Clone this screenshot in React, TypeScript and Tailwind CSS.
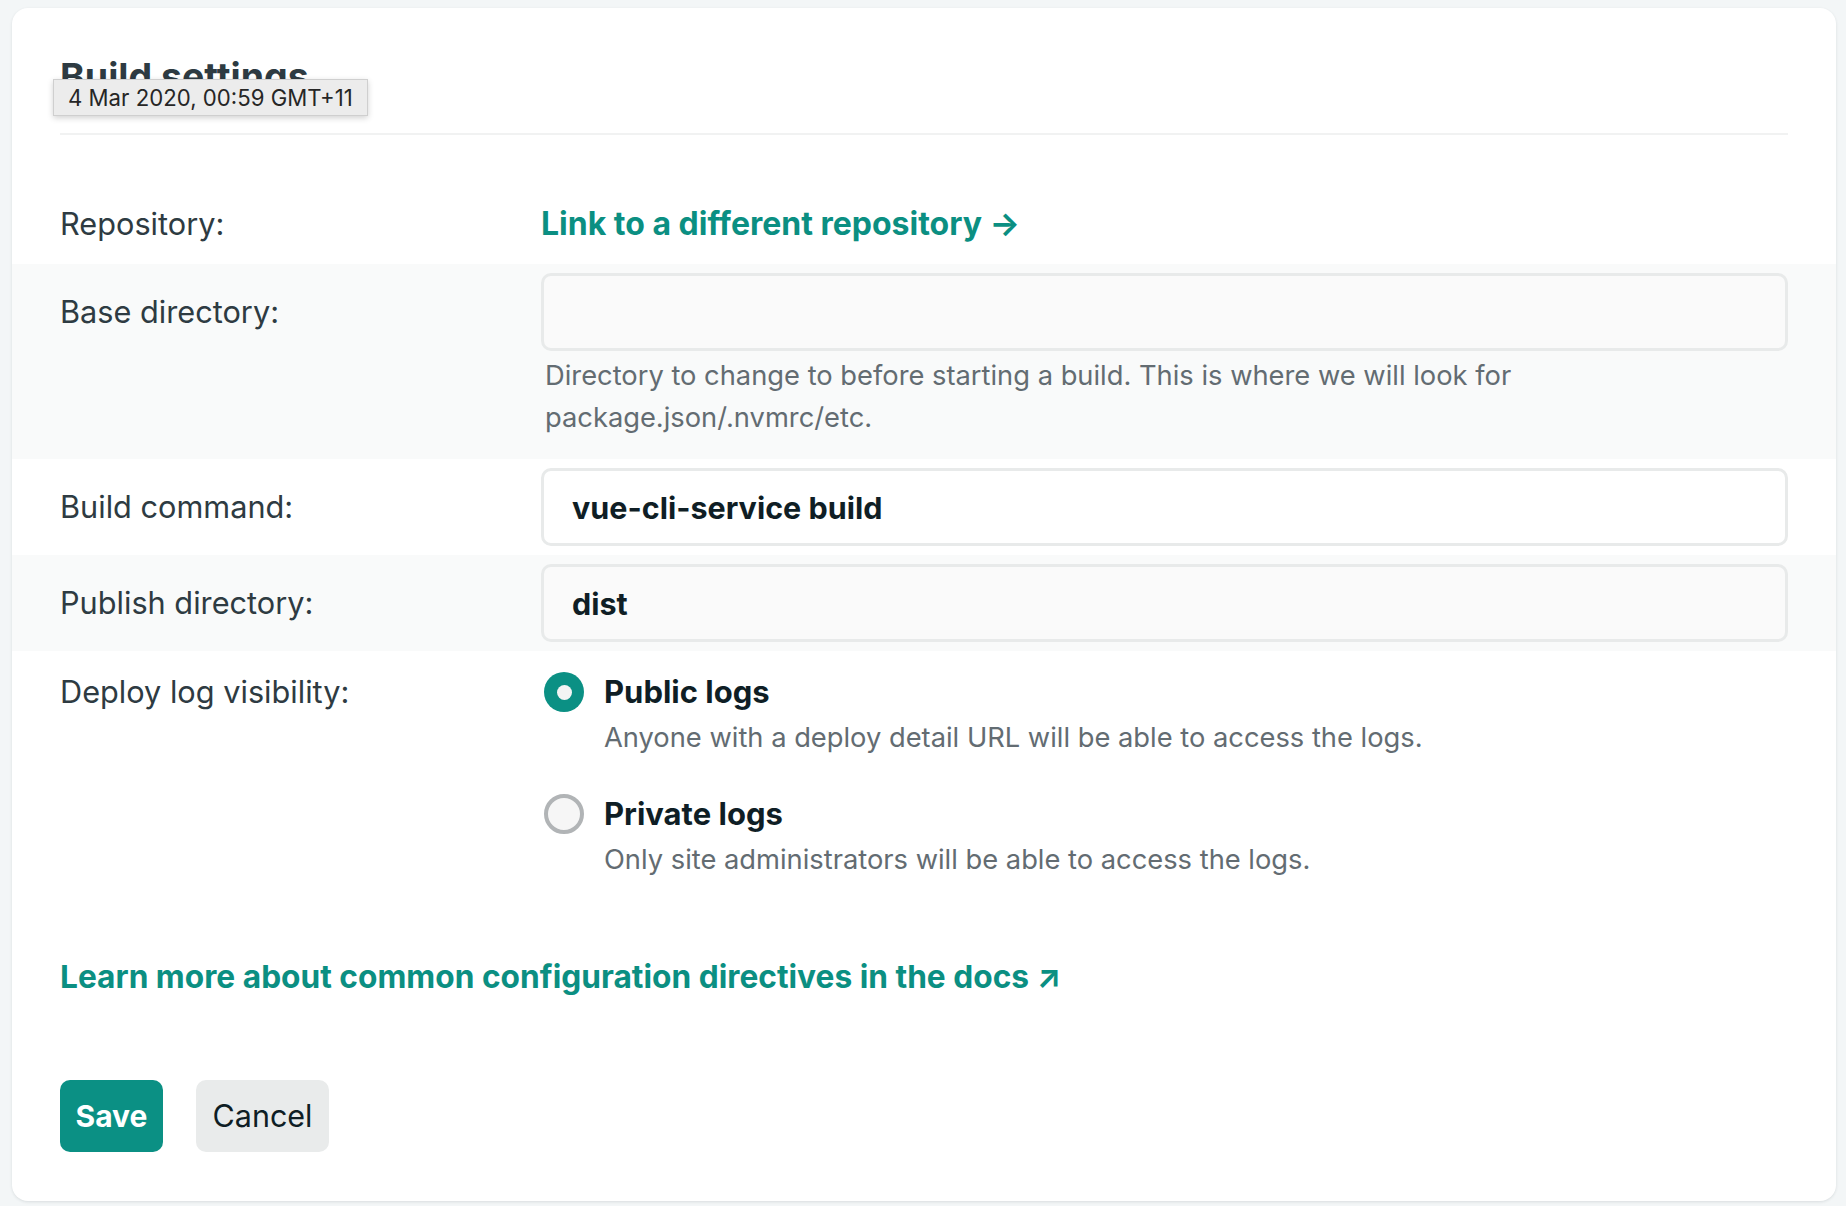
import React from 'react';

const Label: React.FC<{ children: React.ReactNode }> = ({ children }) => (
  <div className="w-[481px] shrink-0 text-[30.7px] text-[#2e3b42]">{children}</div>
);

const Field: React.FC<{ value?: string; white?: boolean }> = ({ value = '', white }) => (
  <input
    readOnly
    value={value}
    className={`h-[78px] w-full rounded-[10px] border-[3px] border-[#e8eaea] pl-[28px] text-[30.5px] font-bold text-[#0f1e25] outline-none ${
      white ? 'bg-white' : 'bg-[#fafafa]'
    }`}
  />
);

const Radio: React.FC<{ checked?: boolean; title: string; desc: string }> = ({ checked, title, desc }) => (
  <div className="flex">
    <div className="flex h-[40px] w-[40px] shrink-0 items-center justify-center">
      {checked ? (
        <span className="flex h-[40px] w-[40px] items-center justify-center rounded-full bg-[#0b9084]">
          <span className="h-[15px] w-[15px] rounded-full bg-[#f3f4f4]" />
        </span>
      ) : (
        <span className="h-[40px] w-[40px] rounded-full border-[4px] border-[#b1b4b6] bg-[#f6f6f6]" />
      )}
    </div>
    <div className="ml-[20px]">
      <div className="text-[31px] leading-[40px] font-bold text-[#0f1e25]">{title}</div>
      <div className="mt-[5px] text-[27.3px] leading-[42px] text-[#636c72]">{desc}</div>
    </div>
  </div>
);

export default function App() {
  return (
    <div className="min-h-screen bg-[#f3f6f7] pt-[8px] pl-[12px] font-['Inter',sans-serif]">
      <div className="w-[1824px] rounded-[16px] bg-white pb-[49px] shadow-[0_1px_3px_rgba(30,50,60,0.12)]">
        {/* header */}
        <div className="relative px-[48px] pt-[46px]">
          <h2 className="text-[37.5px] leading-[45px] font-bold text-[#2e3b42]">Build settings</h2>
          <div className="mt-[34px] h-[2px] bg-[#f1f2f2]" />
          <div className="absolute top-[71px] left-[41px] flex h-[37px] items-center border border-[#cfcfcf] bg-[#ececec] px-[14px] text-[22.2px] text-[#262626] shadow-[0_2px_6px_rgba(0,0,0,0.18)]">
            4 Mar 2020, 00:59 GMT+11
          </div>
        </div>

        {/* repository */}
        <div className="mt-[49px] flex h-[80px] items-center px-[48px]">
          <Label>Repository:</Label>
          <a className="text-[32px] font-bold text-[#0b8f82]">Link to a different repository →</a>
        </div>

        {/* base directory */}
        <div className="flex bg-[#f9fafa] px-[48px] pt-[9px] pb-[20px]">
          <div className="flex h-[78px] items-center">
            <Label>Base directory:</Label>
          </div>
          <div className="flex-1">
            <Field />
            <p className="pt-[4px] pl-[4px] text-[27.3px] leading-[42px] text-[#636c72]">
              Directory to change to before starting a build. This is where we will look for
              <br />
              package.json/.nvmrc/etc.
            </p>
          </div>
        </div>

        {/* build command */}
        <div className="flex items-center px-[48px] py-[9px]">
          <Label>Build command:</Label>
          <div className="flex-1">
            <Field value="vue-cli-service build" white />
          </div>
        </div>

        {/* publish directory */}
        <div className="flex items-center bg-[#f9fafa] px-[48px] py-[9px]">
          <Label>Publish directory:</Label>
          <div className="flex-1">
            <Field value="dist" />
          </div>
        </div>

        {/* deploy log visibility */}
        <div className="flex px-[48px] pt-[21px]">
          <div className="flex h-[40px] items-center">
            <Label>Deploy log visibility:</Label>
          </div>
          <div className="flex flex-col gap-[35px] pl-[3px]">
            <Radio checked title="Public logs" desc="Anyone with a deploy detail URL will be able to access the logs." />
            <Radio title="Private logs" desc="Only site administrators will be able to access the logs." />
          </div>
        </div>

        <div className="mt-[75px] px-[48px] text-[31.7px] leading-[42px] font-bold text-[#0b8f82]">
          Learn more about common configuration directives in the docs ↗
        </div>

        <div className="mt-[82px] flex gap-[33px] px-[48px]">
          <button className="h-[72px] w-[103px] rounded-[10px] bg-[#0b9084] text-[30px] font-bold text-white">
            Save
          </button>
          <button className="h-[72px] w-[133px] rounded-[10px] bg-[#e9ebeb] text-[30.5px] text-[#0f1e25]">
            Cancel
          </button>
        </div>
      </div>
    </div>
  );
}
